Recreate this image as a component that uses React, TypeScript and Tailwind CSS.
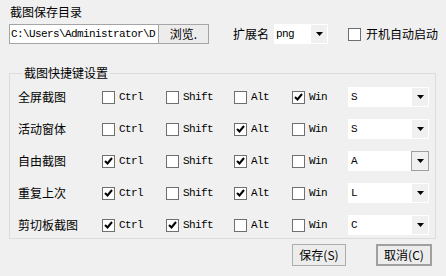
import React from 'react';

const cjk = "font-['Noto_Sans_CJK_SC',sans-serif]";
const mono = "font-['Liberation_Mono',monospace] text-[11px] tracking-[-0.6px]";

const Arrow = () => (
  <svg width="7" height="4" viewBox="0 0 7 4">
    <path d="M0 0h7L3.5 4z" fill="#000" />
  </svg>
);

function Check({ checked, label, w }: { checked?: boolean; label?: string; w: string }) {
  return (
    <div className={`flex items-center ${w}`}>
      <span className="w-[13px] h-[13px] border border-[#6f6f6f] bg-white flex items-center justify-center shrink-0">
        {checked && (
          <svg width="9" height="8" viewBox="0 0 9 8">
            <path d="M1 4 L3.5 6.5 L8 1" stroke="#000" strokeWidth="2" fill="none" />
          </svg>
        )}
      </span>
      {label && <span className={`ml-[4px] text-black ${mono}`}>{label}</span>}
    </div>
  );
}

function Combo({ value, focused }: { value: string; focused?: boolean }) {
  return (
    <div className="flex w-[81px] h-[20px] bg-white">
      <div className={`flex-1 flex items-center pl-[3px] text-black ${mono}`}>{value}</div>
      {focused ? (
        <div className="w-[18px] h-[20px] border border-[#a0a0a0] bg-[#f0f0f0] flex items-center justify-center">
          <Arrow />
        </div>
      ) : (
        <div className="w-[16px] h-[18px] my-[1px] mr-[1px] bg-[#f0f0f0] flex items-center justify-center">
          <Arrow />
        </div>
      )}
    </div>
  );
}

const rows = [
  { name: '全屏截图', ctrl: false, shift: false, alt: false, win: true, key: 'S' },
  { name: '活动窗体', ctrl: false, shift: false, alt: true, win: false, key: 'S' },
  { name: '自由截图', ctrl: true, shift: false, alt: true, win: false, key: 'A', focused: true },
  { name: '重复上次', ctrl: true, shift: false, alt: true, win: false, key: 'L' },
  { name: '剪切板截图', ctrl: true, shift: true, alt: false, win: false, key: 'C' },
];

export default function App() {
  return (
    <div className={`w-[446px] h-[276px] bg-[#f0f0f0] text-[12px] text-black overflow-hidden ${cjk}`}>
      {/* top settings */}
      <div className="flex items-end pl-[9px] pt-[4px]">
        <div className="flex flex-col w-[200px]">
          <div className="h-[16px] leading-[16px] pl-[1px]">截图保存目录</div>
          <div className="flex mt-[4px] h-[20px]">
            <div className={`w-[150px] h-[20px] bg-white border border-[#a5a5a5] flex items-center pl-[1px] overflow-hidden whitespace-nowrap ${mono}`}>
              C:\Users\Administrator\D
            </div>
            <div className="w-[51px] h-[20px] -ml-[1px] border border-[#a5a5a5] bg-[#ececec] flex items-center justify-center">
              浏览.
            </div>
          </div>
        </div>
        <div className="flex items-center h-[20px] ml-[24px]">
          <span className="w-[41px]">扩展名</span>
          <div className="flex w-[54px] h-[20px] bg-white">
            <div className={`flex-1 flex items-center pl-[2px] ${mono}`}>png</div>
            <div className="w-[16px] h-[18px] my-[1px] mr-[1px] bg-[#f0f0f0] flex items-center justify-center">
              <Arrow />
            </div>
          </div>
          <div className="ml-[20px] flex items-center">
            <Check w="w-[18px]" />
            <span>开机自动启动</span>
          </div>
        </div>
      </div>

      {/* hotkey group */}
      <fieldset className="mt-[21px] ml-[9px] w-[427px] border border-[#dcdcdc] pl-[8px] pr-[6px] pb-[3px]">
        <legend className="ml-[4px] px-[2px] h-[16px] leading-[16px]">截图快捷键设置</legend>
        <div className="flex flex-col gap-[12px] pt-[6px]">
          {rows.map((r) => (
            <div key={r.name} className="flex items-center h-[20px]">
              <span className="w-[84px]">{r.name}</span>
              <Check w="w-[64px]" checked={r.ctrl} label="Ctrl" />
              <Check w="w-[68px]" checked={r.shift} label="Shift" />
              <Check w="w-[58px]" checked={r.alt} label="Alt" />
              <Check w="w-[56px]" checked={r.win} label="Win" />
              <Combo value={r.key} focused={r.focused} />
            </div>
          ))}
        </div>
      </fieldset>

      {/* actions */}
      <div className="flex justify-end gap-[30px] mt-[5px] pr-[14px]">
        <button className="w-[54px] h-[22px] border border-[#adadad] bg-[#ececec] flex items-center justify-center">
          保存(S)
        </button>
        <button className="w-[56px] h-[22px] border-2 border-[#a0a0a0] bg-[#ececec] flex items-center justify-center">
          取消(C)
        </button>
      </div>
    </div>
  );
}
